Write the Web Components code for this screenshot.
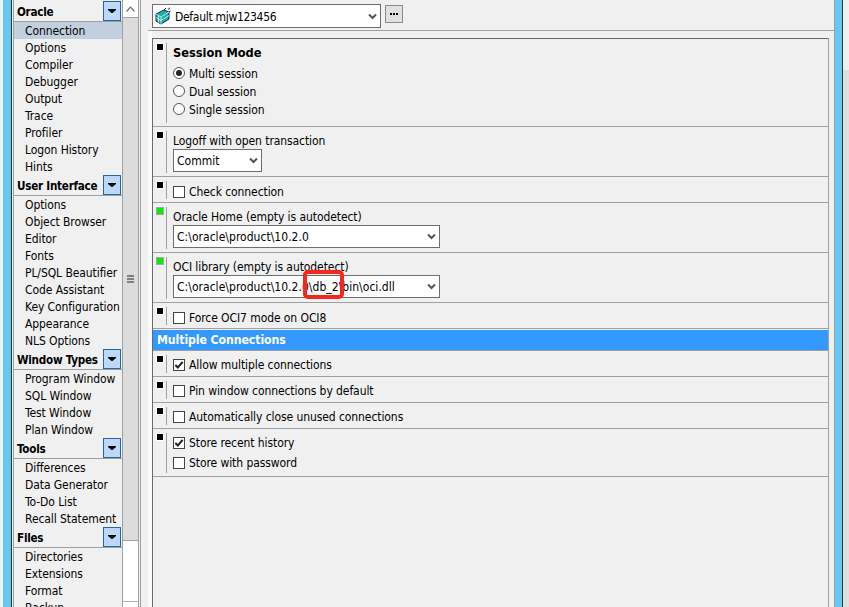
<!DOCTYPE html>
<html><head><meta charset="utf-8"><style>
html,body{margin:0;padding:0;height:607px;overflow:hidden;background:#f0f0f0;font:12px "DejaVu Sans Condensed","DejaVu Sans",sans-serif;letter-spacing:-.08px;color:#000}
</style></head><body>
<app-shell>
<nav-section slot="nav" title="Oracle"><nav-item selected>Connection</nav-item><nav-item>Options</nav-item><nav-item>Compiler</nav-item><nav-item>Debugger</nav-item><nav-item>Output</nav-item><nav-item>Trace</nav-item><nav-item>Profiler</nav-item><nav-item>Logon History</nav-item><nav-item>Hints</nav-item></nav-section>
<nav-section slot="nav" title="User Interface"><nav-item>Options</nav-item><nav-item>Object Browser</nav-item><nav-item>Editor</nav-item><nav-item>Fonts</nav-item><nav-item>PL/SQL Beautifier</nav-item><nav-item>Code Assistant</nav-item><nav-item>Key Configuration</nav-item><nav-item>Appearance</nav-item><nav-item>NLS Options</nav-item></nav-section>
<nav-section slot="nav" title="Window Types"><nav-item>Program Window</nav-item><nav-item>SQL Window</nav-item><nav-item>Test Window</nav-item><nav-item>Plan Window</nav-item></nav-section>
<nav-section slot="nav" title="Tools"><nav-item>Differences</nav-item><nav-item>Data Generator</nav-item><nav-item>To-Do List</nav-item><nav-item>Recall Statement</nav-item></nav-section>
<nav-section slot="nav" title="Files"><nav-item>Directories</nav-item><nav-item>Extensions</nav-item><nav-item>Format</nav-item><nav-item>Backup</nav-item></nav-section>

<pref-row style="--pad:5px;--h:88px">
  <b style="display:block;height:18px;line-height:18px;margin-bottom:2px;font-size:12.7px;letter-spacing:0">Session Mode</b>
  <opt-radio checked>Multi session</opt-radio><opt-radio>Dual session</opt-radio><opt-radio>Single session</opt-radio>
</pref-row>
<pref-row style="--pad:5px;--h:50px">
  <field-label>Logoff with open transaction</field-label>
  <combo-box style="width:89px;margin-top:-1px">Commit</combo-box>
</pref-row>
<pref-row style="--pad:6px;--h:26px"><opt-check>Check connection</opt-check></pref-row>
<pref-row style="--pad:5px;--h:50px" bullet="green">
  <field-label>Oracle Home (empty is autodetect)</field-label>
  <combo-box style="width:267px;margin-top:-1px">C:\oracle\product\10.2.0</combo-box>
</pref-row>
<pref-row style="--pad:5px;--h:50px" bullet="green">
  <field-label>OCI library (empty is autodetect)</field-label>
  <combo-box style="width:267px;margin-top:-1px" mark>C:\oracle\product\10.2.0\db_2\bin\oci.dll</combo-box>
</pref-row>
<pref-row style="--pad:6px;--h:26px"><opt-check>Force OCI7 mode on OCI8</opt-check></pref-row>
<section-bar>Multiple Connections</section-bar>
<pref-row style="--pad:5px;--h:26px"><opt-check checked>Allow multiple connections</opt-check></pref-row>
<pref-row style="--pad:5px;--h:26px"><opt-check>Pin window connections by default</opt-check></pref-row>
<pref-row style="--pad:5px;--h:26px"><opt-check>Automatically close unused connections</opt-check></pref-row>
<pref-row style="--pad:5px;--h:48px"><opt-check checked>Store recent history</opt-check><opt-check style="margin-top:2px">Store with password</opt-check></pref-row>
</app-shell>

<script>
const chev=`<svg width="9" height="7" viewBox="0 0 9 7"><path d="M1 1.5 L4.5 5 L8 1.5" fill="none" stroke="#555" stroke-width="2"/></svg>`;
function def(name,html,init){customElements.define(name,class extends HTMLElement{
  constructor(){super();this.attachShadow({mode:'open'}).innerHTML=html;}
  connectedCallback(){init&&init.call(this,this.shadowRoot);}
});}

def('app-shell',`<style>
:host{display:flex;width:849px;height:607px;overflow:hidden;background:#f0f0f0}
.edge{width:3px;background:#f0f0f0;flex:none}
.blue{width:8px;background:#63c9ef;flex:none;border-right:1px solid #333;box-sizing:content-box}
.gap{width:1px;background:#f0f0f0;flex:none}
.nav{width:109px;flex:none;border-left:1px solid #a0a0a0;padding-top:1px;box-sizing:border-box;height:607px;overflow:hidden}
.scroll{width:17px;flex:none;display:flex;flex-direction:column;box-sizing:border-box;border-left:1px solid #a0a0a0;border-right:1px solid #a0a0a0;height:607px}
.up{height:18px;flex:none;background:#fff;display:flex;align-items:center;justify-content:center;border-bottom:1px solid #a0a0a0;box-sizing:border-box}
.track{height:523px;flex:none;background:#dcdcdc;border-bottom:1px solid #a0a0a0;box-sizing:border-box;display:flex;flex-direction:column;gap:1px;align-items:center;justify-content:center}
.track i{display:block;width:7px;height:2px;background:#808080}
.low{height:60px;flex:none;background:#fff;border-bottom:1px solid #b4b4b4}
.rest{flex:1;background:#fff}
.split{width:1px;flex:none;background:#f0f0f0}
.split2{width:1px;flex:none;background:#a0a0a0}
.main{width:693px;flex:none;display:flex;flex-direction:column;height:607px}
.top{height:30px;flex:none;display:flex;align-items:flex-start;gap:4px;padding:4px 0 0 11px;box-sizing:border-box}
.sep{height:1px;flex:none;margin-left:7px;background:#a0a0a0}
.body{flex:1;display:flex;min-height:0}
.stripe{width:4px;margin-left:7px;background:#fafafa;flex:none}
.panel{width:677px;box-sizing:border-box;margin-top:7px;border-left:1px solid #696969;border-top:1px solid #696969;border-right:1px solid #a0a0a0;flex:none}
.blue2{width:7px;flex:none;background:#63c9ef;border-left:1px solid #a0a0a0;border-right:1px solid #333}
.tail{width:6px;flex:none;background:linear-gradient(#f0f0f0 0 70px,#dedede 70px)}
.rpad{flex:1}
</style>
<div class="edge"></div><div class="blue"></div><div class="gap"></div>
<div class="nav"><slot name="nav"></slot></div>
<div class="scroll"><div class="up"><svg width="9" height="6" viewBox="0 0 9 6"><path d="M0.5 5.5 L4.5 1.2 L8.5 5.5" fill="none" stroke="#707070" stroke-width="1.2"/></svg></div><div class="track"><i></i><i></i><i></i></div><div class="low"></div><div class="rest"></div></div>
<div class="split"></div><div class="split2"></div>
<div class="main">
  <div class="top"><combo-box style="width:229px;height:24px" icon>Default mjw123456</combo-box><dots-btn></dots-btn></div>
  <div class="sep"></div>
  <div class="body"><div class="stripe"></div><div class="panel"><slot></slot></div><div class="rpad"></div></div>
</div>
<div class="blue2"></div><div class="tail"></div>`);

def('nav-section',`<style>
:host{display:block}
.h{height:21px;box-sizing:border-box;border-bottom:1px solid #a0a0a0;display:flex;align-items:center;justify-content:space-between;padding-left:3px;font-weight:bold;font-size:11.6px;letter-spacing:-.25px;background:#f0f0f0;white-space:nowrap}
#t{padding-top:2px}
.b{width:18px;height:20px;flex:none;box-sizing:border-box;background:#bcd9fb;border:1px solid #2b6496;display:flex;align-items:center;justify-content:center;margin-right:1px}
</style><div class="h"><span id="t"></span><div class="b"><svg width="8" height="4" viewBox="0 0 8 4"><path d="M0 0H8V1L4.5 4H3.5L0 1Z" fill="#000"/></svg></div></div><slot></slot>`,
function(r){r.getElementById('t').textContent=this.getAttribute('title');});

def('nav-item',`<style>
:host{display:block;height:17px;line-height:19px;padding-left:11px;white-space:nowrap}
:host([selected]){background:#c1cfde}
</style><slot></slot>`);

def('pref-row',`<style>
:host{display:flex;box-sizing:border-box;height:var(--h);border-bottom:1px solid #a0a0a0;background:#f0f0f0}
.g{width:13px;flex:none;padding-left:4px;box-sizing:border-box;padding-top:5px}
.d{width:6px;height:6px;background:#000;outline:1px solid #fff}
:host([bullet=green]) .d{background:#00f000;outline:1px solid #a8a8a8;width:6px;height:6px}
.v{width:1px;flex:none;background:#a0a0a0;margin:4px 0 3px}
.c{padding:var(--pad) 0 0 6px;flex:1;min-width:0}
</style><div class="g"><div class="d"></div></div><div class="v"></div><div class="c"><slot></slot></div>`);

def('field-label',`<style>:host{display:block;height:18px;line-height:18px;white-space:nowrap}</style><slot></slot>`);

def('opt-radio',`<style>
:host{display:flex;height:18px;align-items:center;gap:4px;white-space:nowrap}
svg{flex:none}
span{padding-top:2px}
</style><svg width="12" height="12" viewBox="0 0 12 12"><circle cx="6" cy="6" r="5.5" fill="#fff" stroke="#555"/><circle id="dot" cx="6" cy="6" r="3" fill="#222"/></svg><span><slot></slot></span>`,
function(r){r.getElementById('dot').style.display=this.hasAttribute('checked')?'':'none';});

def('opt-check',`<style>
:host{display:flex;height:18px;align-items:center;gap:4px;white-space:nowrap}
.b{width:12px;height:12px;box-sizing:border-box;border:1px solid #444;background:#fff;display:flex;flex:none}
</style><div class="b"><svg id="m" width="10" height="10" viewBox="0 0 11 11"><path d="M1.5 5.5L4.2 8.2L9.5 2" fill="none" stroke="#222" stroke-width="2.2"/></svg></div><slot></slot>`,
function(r){r.getElementById('m').style.display=this.hasAttribute('checked')?'':'none';});

def('combo-box',`<style>
:host{display:flex;position:relative;box-sizing:border-box;height:23px;border:1px solid #6e6e6e;background:#fff;align-items:center;padding:0 3px 0 3px;white-space:nowrap;letter-spacing:.03px}
.t{flex:1;min-width:0;overflow:hidden}
.ic{display:none;margin-right:4px;flex:none}
:host([icon]) .ic{display:block}
:host([icon]){padding-left:2px;letter-spacing:-.3px}
:host([icon]) .t{padding-top:2px}
.mark{display:none;position:absolute;left:129px;top:-6px;width:41px;height:29px;box-sizing:border-box;border:4px solid #f5281c;border-radius:5px}
:host([mark]) .mark{display:block}
.ch{display:flex}
</style>
<svg class="ic" width="16" height="18" viewBox="0 0 16 18"><path d="M1 7L9 3L14 5V12L6 17L1 14Z" fill="#18b0a8" stroke="#1c2a44"/><path d="M6 10V17M1 7L6 10L14 5M3.5 8.5V15.5M1 10.5L6 13.5L14 8.5" stroke="#d8fbf6" fill="none" stroke-width=".8"/><path d="M9 3L11 1M13 2.5L15 .8M14 5L15.5 4" stroke="#1c2a44"/></svg>
<div class="t"><slot></slot></div><div class="ch">${chev}</div><div class="mark"></div>`);

def('dots-btn',`<style>
:host{display:flex;width:18px;height:18px;box-sizing:border-box;margin-top:1px;background:#e1e1e1;border:1px solid #8a8a8a;align-items:center;justify-content:center}
</style><svg width="8" height="2" viewBox="0 0 8 2"><path d="M0 0h2v2H0zM3 0h2v2H3zM6 0h2v2H6z" fill="#000"/></svg>`);

def('section-bar',`<style>
:host{display:block;box-sizing:border-box;height:22px;padding-top:1px;border-bottom:1px solid #a0a0a0;background:#f0f0f0}
div{height:20px;line-height:20px;background:#3399ff;color:#fff;font-weight:bold;font-size:12.2px;padding-left:4px}
</style><div><slot></slot></div>`);
</script>
</body></html>
